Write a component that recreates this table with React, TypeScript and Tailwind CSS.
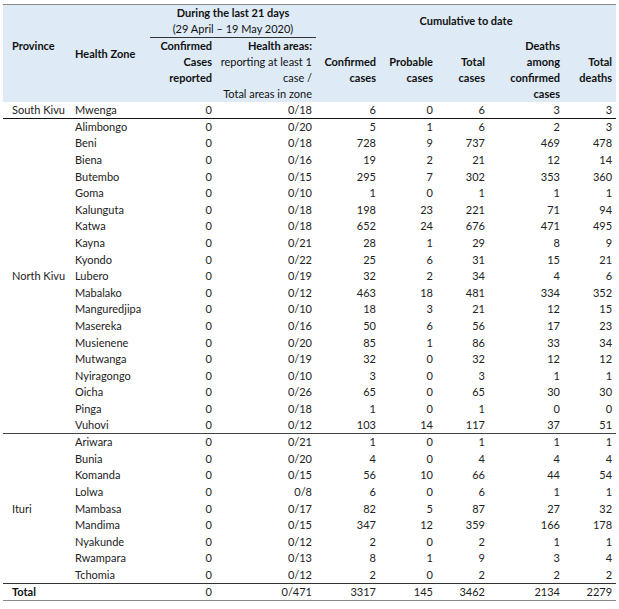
import React from 'react';

type Row = [string, string, number, number, number, number, number];

const southKivu: Row[] = [['Mwenga', '0/18', 6, 0, 6, 3, 3]];

const northKivu: Row[] = [
  ['Alimbongo', '0/20', 5, 1, 6, 2, 3],
  ['Beni', '0/18', 728, 9, 737, 469, 478],
  ['Biena', '0/16', 19, 2, 21, 12, 14],
  ['Butembo', '0/15', 295, 7, 302, 353, 360],
  ['Goma', '0/10', 1, 0, 1, 1, 1],
  ['Kalunguta', '0/18', 198, 23, 221, 71, 94],
  ['Katwa', '0/18', 652, 24, 676, 471, 495],
  ['Kayna', '0/21', 28, 1, 29, 8, 9],
  ['Kyondo', '0/22', 25, 6, 31, 15, 21],
  ['Lubero', '0/19', 32, 2, 34, 4, 6],
  ['Mabalako', '0/12', 463, 18, 481, 334, 352],
  ['Manguredjipa', '0/10', 18, 3, 21, 12, 15],
  ['Masereka', '0/16', 50, 6, 56, 17, 23],
  ['Musienene', '0/20', 85, 1, 86, 33, 34],
  ['Mutwanga', '0/19', 32, 0, 32, 12, 12],
  ['Nyiragongo', '0/10', 3, 0, 3, 1, 1],
  ['Oicha', '0/26', 65, 0, 65, 30, 30],
  ['Pinga', '0/18', 1, 0, 1, 0, 0],
  ['Vuhovi', '0/12', 103, 14, 117, 37, 51],
];

const ituri: Row[] = [
  ['Ariwara', '0/21', 1, 0, 1, 1, 1],
  ['Bunia', '0/20', 4, 0, 4, 4, 4],
  ['Komanda', '0/15', 56, 10, 66, 44, 54],
  ['Lolwa', '0/8', 6, 0, 6, 1, 1],
  ['Mambasa', '0/17', 82, 5, 87, 27, 32],
  ['Mandima', '0/15', 347, 12, 359, 166, 178],
  ['Nyakunde', '0/12', 2, 0, 2, 1, 1],
  ['Rwampara', '0/13', 8, 1, 9, 3, 4],
  ['Tchomia', '0/12', 2, 0, 2, 2, 2],
];

const groups = [
  { province: 'South Kivu', rows: southKivu, border: 'border-b border-b-[#111]' },
  { province: 'North Kivu', rows: northKivu, border: 'border-b border-b-[#444]' },
  { province: 'Ituri', rows: ituri, border: '' },
];

const td = 'p-0 h-[16.6px] leading-[16px] whitespace-nowrap';
const num = `${td} text-right pr-[4px]`;
const th = 'p-0 leading-[16px] whitespace-nowrap';

const App = () => {
  return (
    <div className="w-[619px] h-[609px] bg-white pt-[4px] pl-[3px] text-[11px] text-[#222]" style={{ fontFamily: 'Lato, "Liberation Sans", sans-serif' }}>
      <table className="table-fixed border-collapse w-[613px]">
        <colgroup>
          <col className="w-[67px]" />
          <col className="w-[80px]" />
          <col className="w-[66px]" />
          <col className="w-[100px]" />
          <col className="w-[64px]" />
          <col className="w-[57px]" />
          <col className="w-[52px]" />
          <col className="w-[75px]" />
          <col className="w-[52px]" />
        </colgroup>
        <thead className="bg-[#deeaf6] text-[#111] font-bold">
          <tr className="border-t border-t-[#8a8a8a]">
            <th rowSpan={2} className={`${th} text-left align-middle pl-[9px] pb-[16px]`}>Province</th>
            <th rowSpan={2} className={`${th} text-left align-middle pl-[5px]`}>Health Zone</th>
            <th colSpan={2} className={`${th} text-center align-middle border-b border-b-[#333] h-[33px]`}>
              <div>During the last 21 days</div>
              <div className="font-normal">(29 April – 19 May 2020)</div>
            </th>
            <th colSpan={5} className={`${th} text-center align-middle`}>Cumulative to date</th>
          </tr>
          <tr>
            <th className={`${th} text-right align-top pr-[4px]`}>Confirmed<br />Cases<br />reported</th>
            <th className={`${th} text-right align-middle pr-[4px]`}>
              Health areas:
              <div className="font-normal">reporting at least 1<br />case /<br />Total areas in zone</div>
            </th>
            <th className={`${th} text-right align-middle pr-[4px] h-[64px]`}>Confirmed<br />cases</th>
            <th className={`${th} text-right align-middle pr-[4px]`}>Probable<br />cases</th>
            <th className={`${th} text-right align-middle pr-[4px]`}>Total<br />cases</th>
            <th className={`${th} text-right align-middle pr-[4px]`}>Deaths<br />among<br />confirmed<br />cases</th>
            <th className={`${th} text-right align-middle pr-[4px]`}>Total<br />deaths</th>
          </tr>
        </thead>
        <tbody>
          {groups.map(g =>
            g.rows.map((r, i) => (
              <tr key={g.province + r[0]} className={i === g.rows.length - 1 ? g.border : ''}>
                {i === 0 && (
                  <td rowSpan={g.rows.length} className={`${td} pl-[9px] align-middle`}>{g.province}</td>
                )}
                <td className={`${td} pl-[5px]`}>{r[0]}</td>
                <td className={num}>0</td>
                <td className={num}>{r[1]}</td>
                <td className={num}>{r[2]}</td>
                <td className={num}>{r[3]}</td>
                <td className={num}>{r[4]}</td>
                <td className={num}>{r[5]}</td>
                <td className={num}>{r[6]}</td>
              </tr>
            ))
          )}
          <tr className="border-t-[1.5px] border-t-[#333] border-b-[1.5px] border-b-[#8a8a8a]">
            <td className={`${td} h-[17px] pl-[9px] font-bold text-[#111]`}>Total</td>
            <td className={td}></td>
            <td className={num}>0</td>
            <td className={num}>0/471</td>
            <td className={num}>3317</td>
            <td className={num}>145</td>
            <td className={num}>3462</td>
            <td className={num}>2134</td>
            <td className={num}>2279</td>
          </tr>
        </tbody>
      </table>
    </div>
  );
};

export default App;
